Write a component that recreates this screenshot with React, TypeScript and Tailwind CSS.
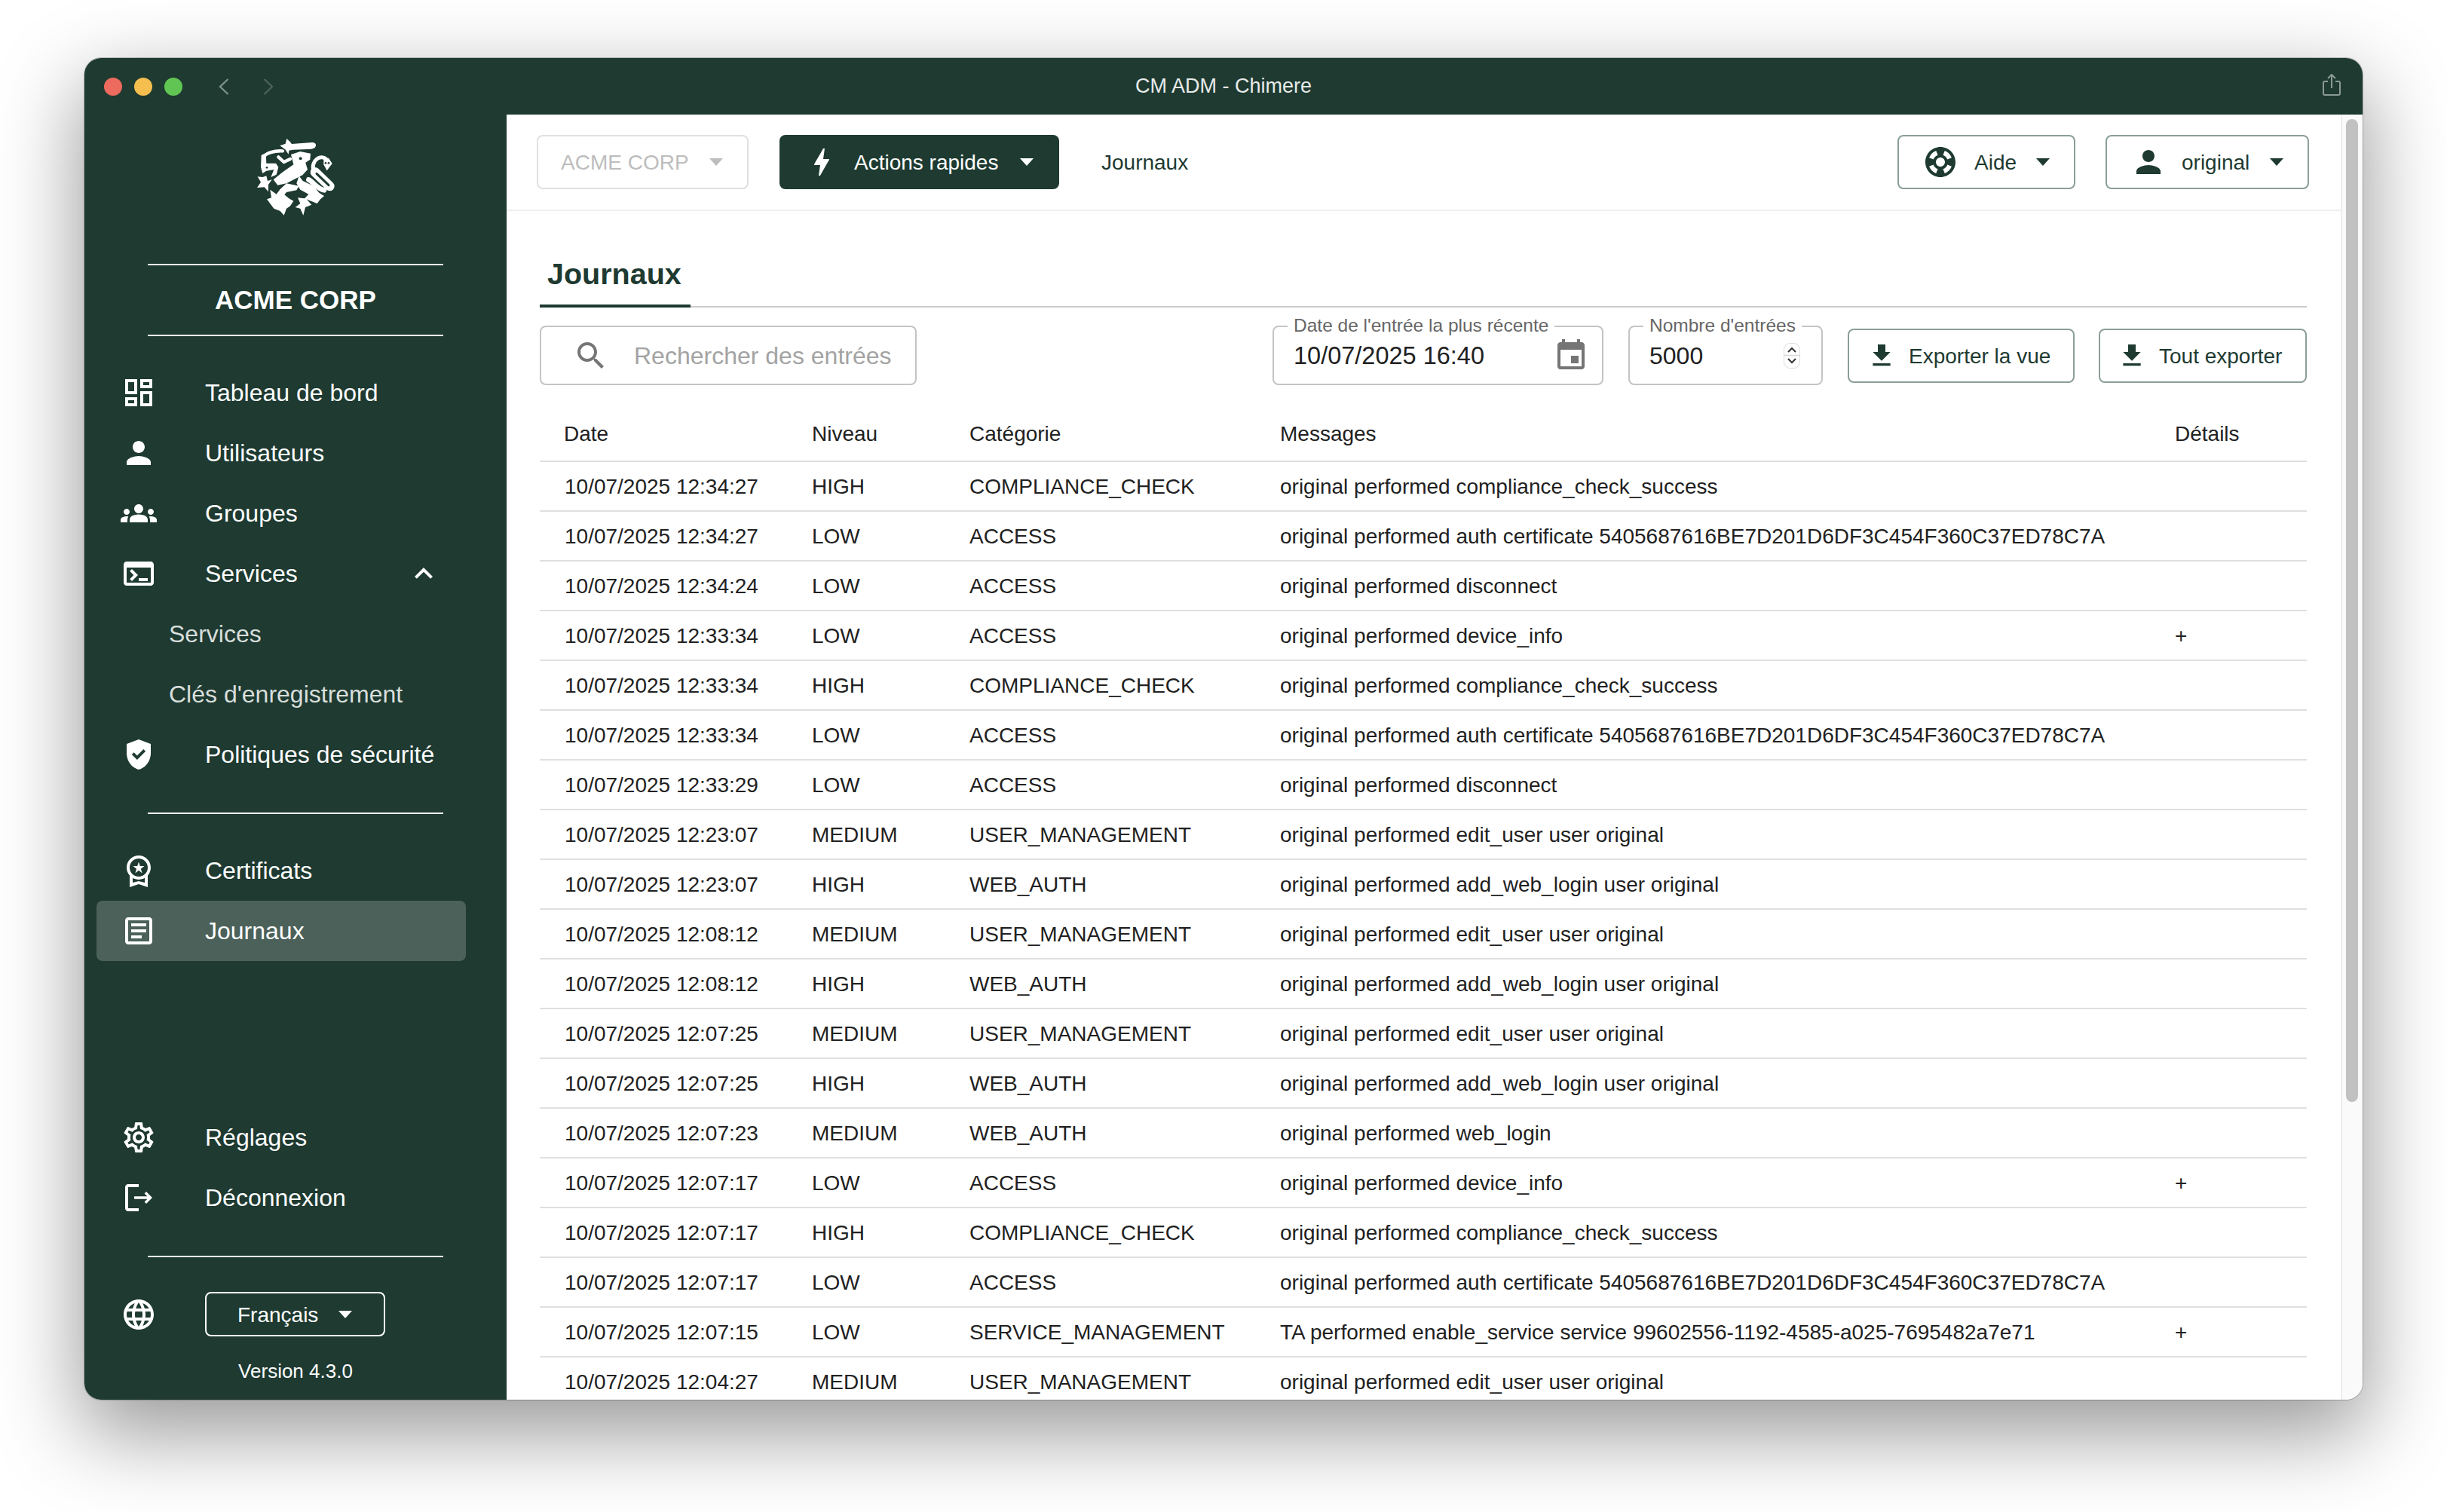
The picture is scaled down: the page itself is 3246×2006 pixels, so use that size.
import React from 'react';

const icons = {
  dashboard: 'M19 5v2h-4V5h4M9 5v6H5V5h4m10 8v6h-4v-6h4M9 17v2H5v-2h4M21 3h-8v6h8V3zM11 3H3v10h8V3zm10 8h-8v10h8V11zm-10 4H3v6h8v-6z',
  person: 'M12 12c2.21 0 4-1.79 4-4s-1.79-4-4-4-4 1.79-4 4 1.79 4 4 4zm0 2c-2.67 0-8 1.34-8 4v2h16v-2c0-2.66-5.33-4-8-4z',
  groups: 'M12 12.75c1.63 0 3.07.39 4.24.9 1.08.48 1.76 1.56 1.76 2.73V18H6v-1.61c0-1.18.68-2.26 1.76-2.73 1.17-.52 2.61-.91 4.24-.91zM4 13c1.1 0 2-.9 2-2s-.9-2-2-2-2 .9-2 2 .9 2 2 2zm1.13 1.1c-.37-.06-.74-.1-1.13-.1-.99 0-1.93.21-2.78.58C.48 14.9 0 15.62 0 16.43V18h4.5v-1.61c0-.83.23-1.61.63-2.29zM20 13c1.1 0 2-.9 2-2s-.9-2-2-2-2 .9-2 2 .9 2 2 2zm4 3.43c0-.81-.48-1.53-1.22-1.85-.85-.37-1.79-.58-2.78-.58-.39 0-.76.04-1.13.1.4.68.63 1.46.63 2.29V18H24v-1.57zM12 6c1.66 0 3 1.34 3 3s-1.34 3-3 3-3-1.34-3-3 1.34-3 3-3z',
  terminal: 'M20 4H4c-1.1 0-2 .9-2 2v12c0 1.1.9 2 2 2h16c1.1 0 2-.9 2-2V6c0-1.1-.9-2-2-2zm0 14H4V8h16v10zm-2-1h-6v-2h6v2zM7.5 17l-1.41-1.41L8.67 13l-2.59-2.59L7.5 9l4 4-4 4z',
  shield: 'M12 2 4 5v6.09c0 5.05 3.41 9.76 8 10.91 4.59-1.15 8-5.86 8-10.91V5l-8-3zm-1.06 13.54L7.4 12l1.41-1.41 2.12 2.12 4.24-4.24 1.41 1.41-5.64 5.66z',
  premium: 'M9.68 13.69 12 11.93l2.31 1.76-.88-2.85L15.75 9h-2.84L12 6.19 11.09 9H8.25l2.31 1.84-.88 2.85zM20 10c0-4.42-3.58-8-8-8s-8 3.58-8 8c0 2.03.76 3.87 2 5.28V23l6-2 6 2v-7.72c1.24-1.41 2-3.25 2-5.28zm-8-6c3.31 0 6 2.69 6 6s-2.69 6-6 6-6-2.69-6-6 2.69-6 6-6zm0 15-4 1.02v-3.1c1.18.68 2.54 1.08 4 1.08s2.82-.4 4-1.08v3.1L12 19z',
  article: 'M19 5v14H5V5h14m0-2H5c-1.1 0-2 .9-2 2v14c0 1.1.9 2 2 2h14c1.1 0 2-.9 2-2V5c0-1.1-.9-2-2-2zM14 17H7v-2h7v2zm3-4H7v-2h10v2zm0-4H7V7h10v2z',
  settings: 'M19.43 12.98c.04-.32.07-.64.07-.98 0-.34-.03-.66-.07-.98l2.11-1.65c.19-.15.24-.42.12-.64l-2-3.46c-.09-.16-.26-.25-.44-.25-.06 0-.12.01-.17.03l-2.49 1c-.52-.4-1.08-.73-1.69-.98l-.38-2.65C14.46 2.18 14.25 2 14 2h-4c-.25 0-.46.18-.49.42l-.38 2.65c-.61.25-1.17.59-1.69.98l-2.49-1c-.06-.02-.12-.03-.18-.03-.17 0-.34.09-.43.25l-2 3.46c-.13.22-.07.49.12.64l2.11 1.65c-.04.32-.07.65-.07.98 0 .33.03.66.07.98l-2.11 1.65c-.19.15-.24.42-.12.64l2 3.46c.09.16.26.25.44.25.06 0 .12-.01.17-.03l2.49-1c.52.4 1.08.73 1.69.98l.38 2.65c.03.24.24.42.49.42h4c.25 0 .46-.18.49-.42l.38-2.65c.61-.25 1.17-.59 1.69-.98l2.49 1c.06.02.12.03.18.03.17 0 .34-.09.43-.25l2-3.46c.12-.22.07-.49-.12-.64l-2.11-1.65zm-1.98-1.71c.04.31.05.52.05.73 0 .21-.02.43-.05.73l-.14 1.13.89.7 1.08.84-.7 1.21-1.27-.51-1.04-.42-.9.68c-.43.32-.84.56-1.25.73l-1.06.43-.16 1.13-.2 1.35h-1.4l-.19-1.35-.16-1.13-1.06-.43c-.43-.18-.83-.41-1.23-.71l-.91-.7-1.06.43-1.27.51-.7-1.21 1.08-.84.89-.7-.14-1.13c-.03-.31-.05-.54-.05-.74s.02-.43.05-.73l.14-1.13-.89-.7-1.08-.84.7-1.21 1.27.51 1.04.42.9-.68c.43-.32.84-.56 1.25-.73l1.06-.43.16-1.13.2-1.35h1.39l.19 1.35.16 1.13 1.06.43c.43.18.83.41 1.23.71l.91.7 1.06-.43 1.27-.51.7 1.21-1.07.85-.89.7.14 1.13zM12 8c-2.21 0-4 1.79-4 4s1.79 4 4 4 4-1.79 4-4-1.79-4-4-4zm0 6c-1.1 0-2-.9-2-2s.9-2 2-2 2 .9 2 2-.9 2-2 2z',
  language: 'M11.99 2C6.47 2 2 6.48 2 12s4.47 10 9.99 10C17.52 22 22 17.52 22 12S17.52 2 11.99 2zm6.93 6h-2.95c-.32-1.25-.78-2.45-1.38-3.56 1.84.63 3.37 1.91 4.33 3.56zM12 4.04c.83 1.2 1.48 2.53 1.91 3.96h-3.82c.43-1.43 1.08-2.76 1.91-3.96zM4.26 14C4.1 13.36 4 12.69 4 12s.1-1.36.26-2h3.38c-.08.66-.14 1.32-.14 2 0 .68.06 1.34.14 2H4.26zm.82 2h2.95c.32 1.25.78 2.45 1.38 3.56-1.84-.63-3.37-1.9-4.33-3.56zm2.95-8H5.08c.96-1.66 2.49-2.93 4.33-3.56C8.81 5.55 8.35 6.75 8.03 8zM12 19.96c-.83-1.2-1.48-2.53-1.91-3.96h3.82c-.43 1.43-1.08 2.76-1.91 3.96zM14.34 14H9.66c-.09-.66-.16-1.32-.16-2 0-.68.07-1.35.16-2h4.68c.09.65.16 1.32.16 2 0 .68-.07 1.34-.16 2zm.25 5.56c.6-1.11 1.06-2.31 1.38-3.56h2.95c-.96 1.65-2.49 2.93-4.33 3.56zM16.36 14c.08-.66.14-1.32.14-2 0-.68-.06-1.34-.14-2h3.38c.16.64.26 1.31.26 2s-.1 1.36-.26 2h-3.38z',
  logout: 'M5 5h7V3H5c-1.1 0-2 .9-2 2v14c0 1.1.9 2 2 2h7v-2H5V5zm12 3-1.2 1.2 1.9 1.9H9v1.8h8.7l-1.9 1.9L17 16l4-4z',
  bolt: 'M11 21h-1l1-7H7.5c-.58 0-.57-.32-.38-.66.19-.34.05-.08.07-.12C8.48 10.94 10.42 7.54 13 3h1l-1 7h3.5c.49 0 .56.33.47.51l-.07.15C12.96 17.55 11 21 11 21z',
  support: 'M12 2C6.48 2 2 6.48 2 12s4.48 10 10 10 10-4.48 10-10S17.52 2 12 2zm7.46 7.12-2.78 1.15c-.51-1.36-1.58-2.44-2.95-2.94l1.15-2.78c2.1.8 3.77 2.47 4.58 4.57zM12 15c-1.66 0-3-1.34-3-3s1.34-3 3-3 3 1.34 3 3-1.34 3-3 3zM9.13 4.54l1.17 2.78c-1.38.5-2.47 1.59-2.98 2.97L4.54 9.13c.81-2.11 2.48-3.78 4.59-4.59zM4.54 14.87l2.78-1.15c.51 1.38 1.59 2.46 2.97 2.96l-1.17 2.78c-2.1-.81-3.77-2.48-4.58-4.59zm10.34 4.59-1.15-2.78c1.37-.51 2.45-1.59 2.95-2.97l2.78 1.17c-.81 2.1-2.48 3.77-4.58 4.58z',
  search: 'M15.5 14h-.79l-.28-.27C15.41 12.59 16 11.11 16 9.5 16 5.91 13.09 3 9.5 3S3 5.91 3 9.5 5.91 16 9.5 16c1.61 0 3.09-.59 4.23-1.57l.27.28v.79l5 4.99L20.49 19l-4.99-5zm-6 0C7.01 14 5 11.99 5 9.5S7.01 5 9.5 5 14 7.01 14 9.5 11.99 14 9.5 14z',
  download: 'M19 9h-4V3H9v6H5l7 7 7-7zM5 18v2h14v-2H5z',
  event: 'M17 12h-5v5h5v-5zM16 1v2H8V1H6v2H5c-1.11 0-1.99.9-1.99 2L3 19c0 1.1.89 2 2 2h14c1.1 0 2-.9 2-2V5c0-1.1-.9-2-2-2h-1V1h-2zm3 18H5V8h14v11z',
  expandLess: 'M12 8l-6 6 1.41 1.41L12 10.83l4.59 4.58L18 14z',
};

const Icon = ({ name, className }: { name: keyof typeof icons; className: string }) => (
  <svg viewBox="0 0 24 24" fill="currentColor" className={className}>
    <path d={icons[name]} />
  </svg>
);

const Caret = ({ className }: { className: string }) => (
  <svg viewBox="0 0 18 10" fill="currentColor" className={`w-[18px] h-[10px] shrink-0 ${className}`}>
    <path d="M0 0h18l-9 10z" />
  </svg>
);

// lion crest, traced by hand
const Logo = () => (
  <svg viewBox="0 0 375 360" className="w-[125px] h-[120px] mx-auto block text-white" fill="currentColor">
    <path d="M124 55l22-8 5-20 14 13 6 8 80-6c14 0 20 8 14 18-6 8-18 9-30 9l-60 2-15 3-2 15-13-19z" />
    <path d="M168 90l37-12 41 8-2 24-18 12 8 28-20 22-64 33-35 7-17-22 37-30 43-30z" />
    <path d="M50 92l18-7 2 40 38 0 10 15-8 30-22 10 12-30-30 5-15 10-7-25z" />
    <path d="M35 178l20 2 15-5 5 20 17-5-14 20 0 28-16-18-29 2 15-22z" />
    <path d="M150 205l50 10-10 17-40 8-8 10 18 15 18 10-13 20-15 10-10 27-15-17-25-10-28-37 18-6-5-32 25 18 15-20z" />
    <path d="M200 175l15 20 43 20 22 27 20 13-15 13-13 17-32-13-10-4 20 22-25 10-8 32-12-27-20-5 20-15-10-23 27 3 16-17-33-18-15-25z" />
    <g fill="none" stroke="currentColor" strokeLinecap="round">
      <path d="M135 76C100 74 70 84 58 100" strokeWidth="13" />
      <path d="M118 100L140 120 165 108" strokeWidth="13" />
      <path d="M258 158C244 112 292 80 316 118" strokeWidth="15" />
      <path d="M264 160L322 216" strokeWidth="38" />
      <path d="M238 190C256 198 270 226 300 232" strokeWidth="20" />
    </g>
    <path d="M298 108l20-4 14 22-21 28-13-24z" />
    <g fill="#1e3a31">
      <path d="M270 166L318 212" stroke="#1e3a31" strokeWidth="9" strokeLinecap="round" />
      <circle cx="206" cy="106" r="6" />
      <circle cx="306" cy="124" r="4" />
      <circle cx="318" cy="124" r="4" />
      <circle cx="72" cy="142" r="4" />
    </g>
  </svg>
);

const Rule = ({ className = '' }: { className?: string }) => (
  <div className={`w-[392px] h-[2px] mx-auto bg-white shrink-0 ${className}`} />
);

const NavItem = ({ icon, label, active, chevron }: { icon: keyof typeof icons; label: string; active?: boolean; chevron?: boolean }) => (
  <div className={`ml-[16px] w-[490px] h-[80px] pl-[32px] pr-[32px] flex items-center rounded-[8px] ${active ? 'bg-[#4b615a]' : ''}`}>
    <Icon name={icon} className="w-[48px] h-[48px] shrink-0" />
    <span className="ml-[64px]">{label}</span>
    {chevron && <Icon name="expandLess" className="w-[48px] h-[48px] ml-auto text-white" />}
  </div>
);

const SubItem = ({ label }: { label: string }) => (
  <div className="ml-[16px] h-[80px] pl-[96px] flex items-center text-[#d8dedb]">{label}</div>
);

const Sidebar = () => (
  <aside className="w-[560px] shrink-0 bg-[#1e3a31] text-white text-[32px] flex flex-col pt-[23px] pb-[23px]">
    <Logo />
    <Rule className="mt-[55px]" />
    <div className="h-[92px] flex items-center justify-center font-bold text-[35px]">ACME CORP</div>
    <Rule />
    <div className="mt-[35px]">
      <NavItem icon="dashboard" label="Tableau de bord" />
      <NavItem icon="person" label="Utilisateurs" />
      <NavItem icon="groups" label="Groupes" />
      <NavItem icon="terminal" label="Services" chevron />
      <SubItem label="Services" />
      <SubItem label="Clés d'enregistrement" />
      <NavItem icon="shield" label="Politiques de sécurité" />
    </div>
    <Rule className="mt-[37px]" />
    <div className="mt-[35px]">
      <NavItem icon="premium" label="Certificats" />
      <NavItem icon="article" label="Journaux" active />
    </div>
    <div className="mt-auto">
      <NavItem icon="settings" label="Réglages" />
      <NavItem icon="logout" label="Déconnexion" />
    </div>
    <Rule className="mt-[37px]" />
    <div className="mt-[46px] ml-[16px] pl-[32px] flex items-center">
      <Icon name="language" className="w-[48px] h-[48px] shrink-0" />
      <div className="ml-[64px] w-[239px] h-[59px] border-2 border-white rounded-[8px] pl-[41px] flex items-center text-[28px]">
        <span className="mt-[2px]">Français</span>
        <Caret className="ml-[27px]" />
      </div>
    </div>
    <div className="mt-[31px] h-[30px] leading-[30px] text-center text-[26px]">Version 4.3.0</div>
  </aside>
);

const TitleBar = () => (
  <div className="h-[75px] shrink-0 bg-[#1e3a31] grid grid-cols-[1fr_auto_1fr] items-center">
    <div className="flex items-center pl-[26px]">
      <span className="w-[24px] h-[24px] rounded-full bg-[#ed6a5e]" />
      <span className="w-[24px] h-[24px] rounded-full bg-[#f4bf4f] ml-[16px]" />
      <span className="w-[24px] h-[24px] rounded-full bg-[#61c554] ml-[16px]" />
      <svg viewBox="0 0 14 22" fill="none" stroke="#7d9189" strokeWidth="2.4" className="w-[14px] h-[22px] ml-[48px]">
        <path d="M12.5 1L2 11l10.5 10" />
      </svg>
      <svg viewBox="0 0 14 22" fill="none" stroke="#4d6159" strokeWidth="2.4" className="w-[14px] h-[22px] ml-[45px]">
        <path d="M1.5 1L12 11 1.5 21" />
      </svg>
    </div>
    <div className="text-[27px] text-white/90">CM ADM - Chimere</div>
    <div className="flex justify-end pr-[29px]">
      <svg viewBox="0 0 24 30" fill="none" stroke="#8a9a94" strokeWidth="2" className="w-[24px] h-[30px] -mt-[4px]">
        <path d="M7 10H3a2 2 0 00-2 2v14a2 2 0 002 2h18a2 2 0 002-2V12a2 2 0 00-2-2h-4M12 19V2M7 6l5-5 5 5" />
      </svg>
    </div>
  </div>
);

const OutlineButton = ({ className, children }: { className: string; children: React.ReactNode }) => (
  <div className={`h-[72px] shrink-0 border-2 border-[#8b9e98] rounded-[8px] flex items-center text-[#1e3a31] text-[28px] ${className}`}>
    {children}
  </div>
);

const HeaderBar = () => (
  <header className="h-[128px] shrink-0 border-b-2 border-[#eeeeee] pl-[40px] pr-[42px] flex items-center text-[28px]">
    <div className="w-[281px] h-[72px] border-2 border-[#e0e0e0] rounded-[8px] pl-[30px] flex items-center text-[#bdbdbd]">
      <span className="mt-[2px]">ACME CORP</span>
      <Caret className="ml-[27px] text-[#bdbdbd]" />
    </div>
    <div className="ml-[41px] w-[371px] h-[72px] rounded-[8px] bg-[#1e3a31] text-white flex items-center pl-[32px]">
      <Icon name="bolt" className="w-[48px] h-[48px] shrink-0" />
      <span className="ml-[19px] mt-[2px]">Actions rapides</span>
      <Caret className="ml-[29px]" />
    </div>
    <span className="ml-[56px] mt-[2px] text-[#1e3a31]">Journaux</span>
    <OutlineButton className="ml-auto w-[236px] pl-[31px]">
      <Icon name="support" className="w-[48px] h-[48px] shrink-0" />
      <span className="ml-[21px] mt-[2px]">Aide</span>
      <Caret className="ml-[26px]" />
    </OutlineButton>
    <OutlineButton className="ml-[40px] w-[270px] pl-[31px]">
      <Icon name="person" className="w-[48px] h-[48px] shrink-0" />
      <span className="ml-[20px] mt-[2px]">original</span>
      <Caret className="ml-[27px]" />
    </OutlineButton>
  </header>
);

const Toolbar = () => (
  <div className="mt-[24px] flex items-center justify-between">
    <div className="w-[500px] h-[79px] border-2 border-[#c4c4c4] rounded-[8px] flex items-center pl-[42px] text-[32px] text-[#a3a3a3]">
      <Icon name="search" className="w-[48px] h-[48px] text-[#757575] shrink-0" />
      <span className="ml-[33px]">Rechercher des entrées</span>
    </div>
    <div className="flex items-center">
      <div className="relative w-[439px] h-[79px] border-2 border-[#c4c4c4] rounded-[8px] flex items-center pl-[26px] pr-[17px] text-[32.5px] text-[#212121]">
        <span className="absolute left-[18px] -top-[16px] h-[28px] leading-[28px] bg-white px-[8px] text-[24.5px] text-[#666666]">Date de l'entrée la plus récente</span>
        <span className="mt-[2px]">10/07/2025 16:40</span>
        <Icon name="event" className="w-[48px] h-[48px] ml-auto text-[#757575]" />
      </div>
      <div className="relative ml-[33px] w-[258px] h-[79px] border-2 border-[#c4c4c4] rounded-[8px] flex items-center pl-[26px] pr-[28px] text-[32px] text-[#212121]">
        <span className="absolute left-[18px] -top-[16px] h-[28px] leading-[28px] bg-white px-[8px] text-[24.5px] text-[#666666]">Nombre d'entrées</span>
        5000
        <svg viewBox="0 0 22 34" fill="none" className="w-[22px] h-[34px] ml-auto">
          <rect x="0.5" y="0.5" width="21" height="33" rx="8" fill="#fff" stroke="#dcdcdc" />
          <path d="M1 16.5h20" stroke="#d8d8d8" strokeWidth="1.5" />
          <path d="M6 12l5-5 5 5M6 21l5 5 5-5" stroke="#333" strokeWidth="2" />
        </svg>
      </div>
      <OutlineButton className="ml-[33px] w-[301px] pl-[23px]">
        <Icon name="download" className="w-[40px] h-[40px] shrink-0" />
        <span className="ml-[16px] mt-[2px]">Exporter la vue</span>
      </OutlineButton>
      <OutlineButton className="ml-[32px] w-[276px] pl-[22px]">
        <Icon name="download" className="w-[40px] h-[40px] shrink-0" />
        <span className="ml-[16px] mt-[2px]">Tout exporter</span>
      </OutlineButton>
    </div>
  </div>
);

const cert = 'original performed auth certificate 5405687616BE7D201D6DF3C454F360C37ED78C7A';
const rows: [string, string, string, string, boolean?][] = [
  ['10/07/2025 12:34:27', 'HIGH', 'COMPLIANCE_CHECK', 'original performed compliance_check_success'],
  ['10/07/2025 12:34:27', 'LOW', 'ACCESS', cert],
  ['10/07/2025 12:34:24', 'LOW', 'ACCESS', 'original performed disconnect'],
  ['10/07/2025 12:33:34', 'LOW', 'ACCESS', 'original performed device_info', true],
  ['10/07/2025 12:33:34', 'HIGH', 'COMPLIANCE_CHECK', 'original performed compliance_check_success'],
  ['10/07/2025 12:33:34', 'LOW', 'ACCESS', cert],
  ['10/07/2025 12:33:29', 'LOW', 'ACCESS', 'original performed disconnect'],
  ['10/07/2025 12:23:07', 'MEDIUM', 'USER_MANAGEMENT', 'original performed edit_user user original'],
  ['10/07/2025 12:23:07', 'HIGH', 'WEB_AUTH', 'original performed add_web_login user original'],
  ['10/07/2025 12:08:12', 'MEDIUM', 'USER_MANAGEMENT', 'original performed edit_user user original'],
  ['10/07/2025 12:08:12', 'HIGH', 'WEB_AUTH', 'original performed add_web_login user original'],
  ['10/07/2025 12:07:25', 'MEDIUM', 'USER_MANAGEMENT', 'original performed edit_user user original'],
  ['10/07/2025 12:07:25', 'HIGH', 'WEB_AUTH', 'original performed add_web_login user original'],
  ['10/07/2025 12:07:23', 'MEDIUM', 'WEB_AUTH', 'original performed web_login'],
  ['10/07/2025 12:07:17', 'LOW', 'ACCESS', 'original performed device_info', true],
  ['10/07/2025 12:07:17', 'HIGH', 'COMPLIANCE_CHECK', 'original performed compliance_check_success'],
  ['10/07/2025 12:07:17', 'LOW', 'ACCESS', cert],
  ['10/07/2025 12:07:15', 'LOW', 'SERVICE_MANAGEMENT', 'TA performed enable_service service 99602556-1192-4585-a025-7695482a7e71', true],
  ['10/07/2025 12:04:27', 'MEDIUM', 'USER_MANAGEMENT', 'original performed edit_user user original'],
];

const LogTable = () => (
  <table className="mt-[29px] w-[2344px] table-fixed border-separate border-spacing-0 text-[28px] text-[#212121]">
    <thead>
      <tr>
        <th className="w-[329px] h-[73px] pl-[32px] text-left font-normal border-b-2 border-[#e0e0e0]">Date</th>
        <th className="w-[209px] pl-[32px] text-left font-normal border-b-2 border-[#e0e0e0]">Niveau</th>
        <th className="w-[412px] pl-[32px] text-left font-normal border-b-2 border-[#e0e0e0]">Catégorie</th>
        <th className="w-[1186px] pl-[32px] text-left font-normal border-b-2 border-[#e0e0e0]">Messages</th>
        <th className="w-[208px] pl-[33px] text-left font-normal border-b-2 border-[#e0e0e0]">Détails</th>
      </tr>
    </thead>
    <tbody>
      {rows.map(([date, level, category, message, details], i) => (
        <tr key={i}>
          <td className="h-[66px] pt-[2px] pl-[33px] border-b-2 border-[#e0e0e0]">{date}</td>
          <td className="pt-[2px] pl-[32px] border-b-2 border-[#e0e0e0]">{level}</td>
          <td className="pt-[2px] pl-[32px] border-b-2 border-[#e0e0e0] whitespace-nowrap">{category}</td>
          <td className="pt-[2px] pl-[32px] border-b-2 border-[#e0e0e0] whitespace-nowrap">{message}</td>
          <td className="pt-[2px] pl-[33px] border-b-2 border-[#e0e0e0]">{details ? '+' : ''}</td>
        </tr>
      ))}
    </tbody>
  </table>
);

export default function App() {
  return (
    <div className="w-[3246px] h-[2006px] bg-white overflow-hidden pt-[77px] pl-[112px] font-['Liberation_Sans',Arial,sans-serif]">
      <div className="w-[3022px] h-[1780px] rounded-[22px] overflow-hidden flex flex-col bg-white shadow-[0_40px_110px_6px_rgba(0,0,0,0.4),0_0_0_1px_rgba(0,0,0,0.22)]">
        <TitleBar />
        <div className="flex-1 min-h-0 flex">
          <Sidebar />
          <main className="flex-1 min-w-0 overflow-hidden flex flex-col">
            <HeaderBar />
            <div className="pl-[44px] pr-[45px]">
              <div className="pt-[60px] border-b-2 border-[#cccccc]">
                <div className="w-[200px] h-[68px] -mb-[2px] border-b-4 border-[#1e3a31] pl-[10px] text-[39.5px] leading-[46px] font-bold text-[#1e3a31]">Journaux</div>
              </div>
              <Toolbar />
              <LogTable />
            </div>
          </main>
          <div className="w-[29px] shrink-0 border-l-2 border-[#eeeeee] bg-[#fafafa] pl-[5px] pt-[6px]">
            <div className="w-[16px] h-[1304px] rounded-full bg-[#c1c1c1]" />
          </div>
        </div>
      </div>
    </div>
  );
}
